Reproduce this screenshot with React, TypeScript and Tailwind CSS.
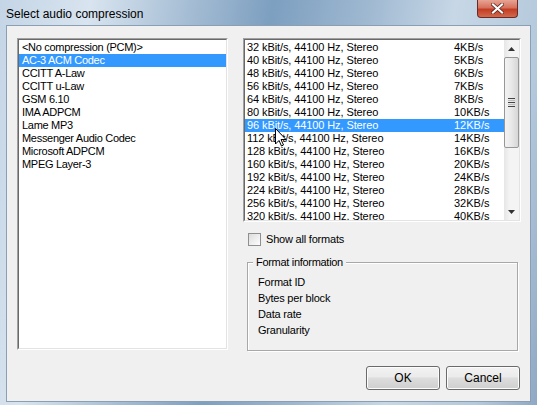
import React from "react";

const codecs = [
  "<No compression (PCM)>",
  "AC-3 ACM Codec",
  "CCITT A-Law",
  "CCITT u-Law",
  "GSM 6.10",
  "IMA ADPCM",
  "Lame MP3",
  "Messenger Audio Codec",
  "Microsoft ADPCM",
  "MPEG Layer-3",
];

const formats: [string, string][] = [
  ["32 kBit/s, 44100 Hz, Stereo", "4KB/s"],
  ["40 kBit/s, 44100 Hz, Stereo", "5KB/s"],
  ["48 kBit/s, 44100 Hz, Stereo", "6KB/s"],
  ["56 kBit/s, 44100 Hz, Stereo", "7KB/s"],
  ["64 kBit/s, 44100 Hz, Stereo", "8KB/s"],
  ["80 kBit/s, 44100 Hz, Stereo", "10KB/s"],
  ["96 kBit/s, 44100 Hz, Stereo", "12KB/s"],
  ["112 kBit/s, 44100 Hz, Stereo", "14KB/s"],
  ["128 kBit/s, 44100 Hz, Stereo", "16KB/s"],
  ["160 kBit/s, 44100 Hz, Stereo", "20KB/s"],
  ["192 kBit/s, 44100 Hz, Stereo", "24KB/s"],
  ["224 kBit/s, 44100 Hz, Stereo", "28KB/s"],
  ["256 kBit/s, 44100 Hz, Stereo", "32KB/s"],
  ["320 kBit/s, 44100 Hz, Stereo", "40KB/s"],
];

function Sunken({ className, children }: { className: string; children: React.ReactNode }) {
  return (
    <div className={`border border-t-[#a0a0a0] border-l-[#a0a0a0] border-r-white border-b-white ${className}`}>
      <div className="h-full w-full border border-t-[#696969] border-l-[#696969] border-r-[#e3e3e3] border-b-[#e3e3e3] bg-white overflow-hidden">
        {children}
      </div>
    </div>
  );
}

function Btn({ label }: { label: string }) {
  return (
    <div className="w-[74px] h-[24px] rounded-[3px] border border-[#6a6a6a] bg-[linear-gradient(#f2f2f2_0%,#ebebeb_45%,#dddddd_50%,#cfcfcf_100%)] flex items-center justify-center text-[12px] text-black shadow-[inset_0_0_0_1px_#fcfcfc]">
      {label}
    </div>
  );
}

export default function App() {
  return (
    <div
      className="relative w-[537px] h-[405px] flex flex-col overflow-hidden bg-[linear-gradient(100deg,#c4d5e6_0%,#d8e4ef_15%,#a9c0d6_30%,#7d9fc0_45%,#9db7d0_60%,#c7d7e6_75%,#b4c9dc_90%,#8fa9c4_100%)]"
      style={{ fontFamily: '"Liberation Sans", Arial, sans-serif' }}
    >
      {/* title bar */}
      <div className="h-[25px] flex items-start shrink-0 relative">
        <div className="pl-[6px] pt-[5px] text-[12px] text-black">Select audio compression</div>
        <div className="absolute left-[477px] top-0 w-[41px] h-[18px] rounded-b-[4px] border border-t-0 border-[#6b2a26] bg-[linear-gradient(#e8a494_0%,#d6725e_45%,#c43d23_55%,#d06a4e_100%)] flex items-center justify-center">
          <svg width="13" height="11" viewBox="0 0 13 11">
            <path d="M2 1.5 L11 9.5 M11 1.5 L2 9.5" stroke="#5a2018" strokeWidth="3.6" strokeLinecap="square" />
            <path d="M2 1.5 L11 9.5 M11 1.5 L2 9.5" stroke="#ffffff" strokeWidth="2.2" strokeLinecap="square" />
          </svg>
        </div>
      </div>

      {/* client */}
      <div className="mx-[6px] h-[377px] bg-[#f0f0f0] border border-[#8a9fb4] flex flex-col text-[11px] text-black">
        <div className="flex pl-[10px] pt-[12px]">
          {/* left list */}
          <Sunken className="w-[211px] h-[312px]">
            <div className="pt-[1px] tracking-[-0.3px]">
              {codecs.map((c, i) => (
                <div
                  key={c}
                  className={`h-[13px] leading-[13px] pl-[3px] whitespace-nowrap ${i === 1 ? "bg-[#3399ff] text-white" : ""}`}
                >
                  {c}
                </div>
              ))}
            </div>
          </Sunken>

          {/* right column */}
          <div className="ml-[15px] w-[278px] flex flex-col">
            <Sunken className="w-[278px] h-[184px]">
              <div className="flex h-full">
                <div className="flex-1 pt-[1px] overflow-hidden">
                  {formats.map(([a, b], i) => (
                    <div
                      key={a}
                      className={`h-[13px] leading-[13px] flex whitespace-nowrap ${i === 6 ? "bg-[#3399ff] text-white" : ""}`}
                    >
                      <span className="pl-[2px] w-[209px] tracking-[-0.1px]">{a}</span>
                      <span>{b}</span>
                    </div>
                  ))}
                </div>
                {/* scrollbar */}
                <div className="w-[15px] h-full bg-[linear-gradient(90deg,#e6e6e6,#f4f4f4_40%,#f4f4f4)] flex flex-col items-center">
                  <div className="h-[17px] w-full flex items-center justify-center">
                    <svg width="7" height="4" viewBox="0 0 7 4">
                      <path d="M0 4 L3.5 0 L7 4 Z" fill="#333" />
                    </svg>
                  </div>
                  <div className="w-[15px] h-[91px] rounded-[2px] border border-[#979797] bg-[linear-gradient(90deg,#f3f3f3,#e8e8e8_50%,#d6d6d6)] flex flex-col items-center justify-center gap-[1px]">
                    <div className="w-[7px] h-[1px] bg-[#444]" />
                    <div className="w-[7px] h-[1px] bg-[#bbb]" />
                    <div className="w-[7px] h-[1px] bg-[#444]" />
                    <div className="w-[7px] h-[1px] bg-[#bbb]" />
                    <div className="w-[7px] h-[1px] bg-[#444]" />
                  </div>
                  <div className="flex-1" />
                  <div className="h-[17px] w-full flex items-center justify-center">
                    <svg width="7" height="4" viewBox="0 0 7 4">
                      <path d="M0 0 L3.5 4 L7 0 Z" fill="#333" />
                    </svg>
                  </div>
                </div>
              </div>
            </Sunken>

            {/* checkbox */}
            <div className="mt-[11px] ml-[5px] flex items-center h-[13px]">
              <div className="w-[13px] h-[13px] border border-[#8e8f8f] bg-[linear-gradient(135deg,#dcdcdc,#fdfdfd)]" />
              <span className="ml-[5px] tracking-[-0.2px]">Show all formats</span>
            </div>

            {/* group box */}
            <div className="relative mt-[16px] ml-[4px] w-[271px] h-[89px] border border-[#a8a8a8] shadow-[1px_1px_0_0_#ffffff,inset_1px_1px_0_0_#ffffff]">
              <div className="absolute -top-[8px] left-[5px] px-[3px] bg-[#f0f0f0] leading-[14px] tracking-[-0.3px]">Format information</div>
              <div className="pt-[11px] pl-[10px] flex flex-col tracking-[-0.2px]">
                <div className="h-[16px] leading-[16px]">Format ID</div>
                <div className="h-[16px] leading-[16px]">Bytes per block</div>
                <div className="h-[16px] leading-[16px]">Data rate</div>
                <div className="h-[16px] leading-[16px]">Granularity</div>
              </div>
            </div>
          </div>
        </div>

        {/* buttons */}
        <div className="flex justify-end gap-[6px] pr-[10px] mt-[15px]">
          <Btn label="OK" />
          <Btn label="Cancel" />
        </div>
      </div>

      {/* cursor */}
      <svg className="absolute left-[275px] top-[128px]" width="12" height="19" viewBox="0 0 12 19">
        <path d="M0.5 0.5 L0.5 16 L4 12.5 L6.5 18 L8.5 17 L6 11.5 L11 11.5 Z" fill="#fff" stroke="#000" strokeWidth="1" strokeLinejoin="miter" />
      </svg>
    </div>
  );
}
